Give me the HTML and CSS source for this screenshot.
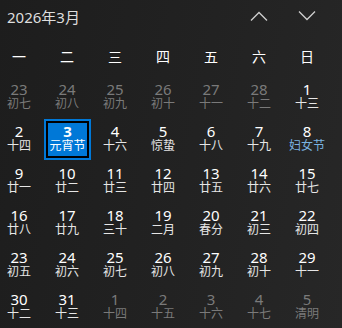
FILE: index.html
```html
<!DOCTYPE html>
<html lang="zh-CN">
<head>
    <meta charset="utf-8"/>
    <title>日历</title>
    <link rel="stylesheet" href="styles.css">
</head>
<body>
    <div class="calendar">
        <div class="cal-header">
            <span class="month-title">2026年3月</span>
            <div class="nav">
                <button class="nav-btn" title="上个月">
                    <svg width="18" height="10" viewBox="0 0 18 10"><path d="M1 9.5 L9 1.5 L17 9.5" fill="none" stroke="#cfcfcf" stroke-width="1.3"/></svg>
                </button>
                <button class="nav-btn" title="下个月">
                    <svg width="18" height="10" viewBox="0 0 18 10"><path d="M1 0.5 L9 8.5 L17 0.5" fill="none" stroke="#cfcfcf" stroke-width="1.3"/></svg>
                </button>
            </div>
        </div>

        <div class="weekdays">
            <span>一</span><span>二</span><span>三</span><span>四</span><span>五</span><span>六</span><span>日</span>
        </div>

        <div class="days">
            <div class="day other"><span class="num">23</span><span class="lunar">初七</span></div>
            <div class="day other"><span class="num">24</span><span class="lunar">初八</span></div>
            <div class="day other"><span class="num">25</span><span class="lunar">初九</span></div>
            <div class="day other"><span class="num">26</span><span class="lunar">初十</span></div>
            <div class="day other"><span class="num">27</span><span class="lunar">十一</span></div>
            <div class="day other"><span class="num">28</span><span class="lunar">十二</span></div>
            <div class="day"><span class="num">1</span><span class="lunar">十三</span></div>

            <div class="day"><span class="num">2</span><span class="lunar">十四</span></div>
            <div class="day today"><span class="num">3</span><span class="lunar">元宵节</span></div>
            <div class="day"><span class="num">4</span><span class="lunar">十六</span></div>
            <div class="day"><span class="num">5</span><span class="lunar">惊蛰</span></div>
            <div class="day"><span class="num">6</span><span class="lunar">十八</span></div>
            <div class="day"><span class="num">7</span><span class="lunar">十九</span></div>
            <div class="day"><span class="num">8</span><span class="lunar festival">妇女节</span></div>

            <div class="day"><span class="num">9</span><span class="lunar">廿一</span></div>
            <div class="day"><span class="num">10</span><span class="lunar">廿二</span></div>
            <div class="day"><span class="num">11</span><span class="lunar">廿三</span></div>
            <div class="day"><span class="num">12</span><span class="lunar">廿四</span></div>
            <div class="day"><span class="num">13</span><span class="lunar">廿五</span></div>
            <div class="day"><span class="num">14</span><span class="lunar">廿六</span></div>
            <div class="day"><span class="num">15</span><span class="lunar">廿七</span></div>

            <div class="day"><span class="num">16</span><span class="lunar">廿八</span></div>
            <div class="day"><span class="num">17</span><span class="lunar">廿九</span></div>
            <div class="day"><span class="num">18</span><span class="lunar">三十</span></div>
            <div class="day"><span class="num">19</span><span class="lunar">二月</span></div>
            <div class="day"><span class="num">20</span><span class="lunar">春分</span></div>
            <div class="day"><span class="num">21</span><span class="lunar">初三</span></div>
            <div class="day"><span class="num">22</span><span class="lunar">初四</span></div>

            <div class="day"><span class="num">23</span><span class="lunar">初五</span></div>
            <div class="day"><span class="num">24</span><span class="lunar">初六</span></div>
            <div class="day"><span class="num">25</span><span class="lunar">初七</span></div>
            <div class="day"><span class="num">26</span><span class="lunar">初八</span></div>
            <div class="day"><span class="num">27</span><span class="lunar">初九</span></div>
            <div class="day"><span class="num">28</span><span class="lunar">初十</span></div>
            <div class="day"><span class="num">29</span><span class="lunar">十一</span></div>

            <div class="day"><span class="num">30</span><span class="lunar">十二</span></div>
            <div class="day"><span class="num">31</span><span class="lunar">十三</span></div>
            <div class="day other"><span class="num">1</span><span class="lunar">十四</span></div>
            <div class="day other"><span class="num">2</span><span class="lunar">十五</span></div>
            <div class="day other"><span class="num">3</span><span class="lunar">十六</span></div>
            <div class="day other"><span class="num">4</span><span class="lunar">十七</span></div>
            <div class="day other"><span class="num">5</span><span class="lunar">清明</span></div>
        </div>
    </div>
</body>
</html>
```

FILE: styles.css
```css
html, body {
    margin: 0;
    padding: 0;
}

body {
    font-family: 'Noto Sans', 'Noto Sans CJK SC', sans-serif;
    background: linear-gradient(100deg, #1d1d1d 0%, #222 55%, #272727 100%);
    color: #ffffff;
    width: 342px;
    height: 328px;
    overflow: hidden;
}

.calendar {
    width: 342px;
}

.cal-header {
    height: 36px;
    display: flex;
    align-items: center;
    justify-content: space-between;
    padding-left: 7px;
}

.month-title {
    font-size: 15px;
    color: #dedede;
    line-height: 20px;
    margin-top: -2px;
}

.nav {
    display: flex;
    margin-right: 11px;
    margin-top: -4px;
}

.nav-btn {
    width: 48px;
    height: 30px;
    padding: 0;
    border: none;
    background: none;
    display: flex;
    align-items: center;
    justify-content: center;
}

.weekdays {
    display: grid;
    grid-template-columns: repeat(7, 48px);
    height: 40px;
    align-items: center;
    margin-left: -5px;
    font-family: 'Noto Sans CJK SC', sans-serif;
    font-size: 14px;
    color: #ffffff;
}

.weekdays span {
    text-align: center;
}

.days {
    display: grid;
    grid-template-columns: repeat(7, 48px);
    grid-auto-rows: 42px;
    margin-left: -5px;
}

.day {
    display: flex;
    flex-direction: column;
    align-items: center;
    padding-top: 6px;
    box-sizing: border-box;
}

.num {
    font-size: 15px;
    line-height: 14px;
}

.lunar {
    font-family: 'Noto Sans CJK SC', sans-serif;
    font-size: 12px;
    line-height: 13px;
    color: #e6e6e6;
}

.other .num,
.other .lunar {
    color: #7a7a7a;
}

.festival {
    color: #7ab3e0;
}

.today {
    margin: 1px 0 0 1px;
    padding-top: 3px;
    background-color: #0078d7;
    border: 2px solid #0078d7;
    box-shadow: inset 0 0 0 2px #000;
}

.today .num {
    font-weight: bold;
}

.today .lunar {
    color: #ffffff;
}
```
